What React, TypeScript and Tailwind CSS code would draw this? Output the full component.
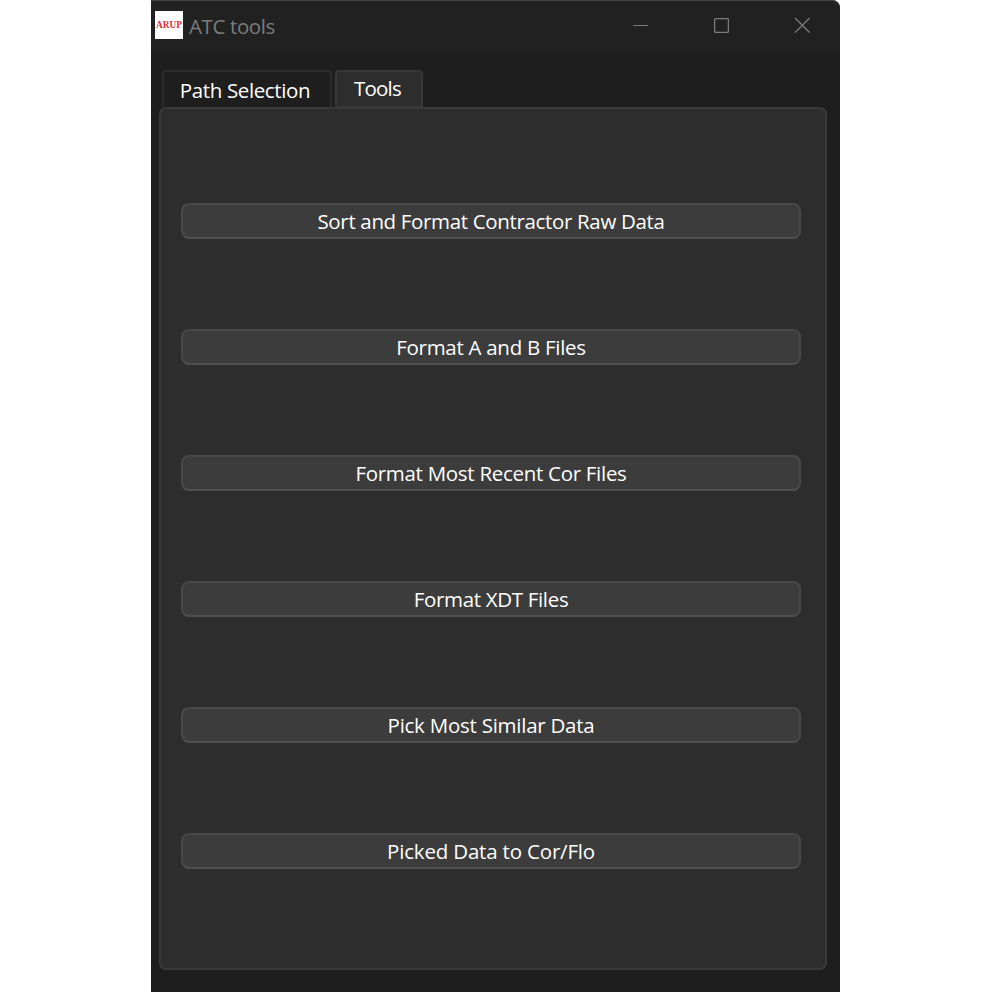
const actions = [
  { label: "Sort and Format Contractor Raw Data", tracking: "tracking-[-0.34px]" },
  { label: "Format A and B Files", tracking: "tracking-[-0.28px]" },
  { label: "Format Most Recent Cor Files", tracking: "tracking-[-0.29px]" },
  { label: "Format XDT Files", tracking: "tracking-[-0.32px]" },
  { label: "Pick Most Similar Data", tracking: "tracking-[-0.25px]" },
  { label: "Picked Data to Cor/Flo", tracking: "tracking-[-0.18px]" },
];

function TitleBar() {
  return (
    <header className="flex h-[51px] shrink-0 items-start rounded-tr-lg border-t border-[#444444] bg-[#212121] pl-1">
      <div className="mt-[10px] flex size-7 items-center justify-center bg-white pt-px">
        <span className="font-['Liberation_Serif',serif] text-[9.3px] leading-none font-bold text-[#d9303c]">ARUP</span>
      </div>
      <h1 className="mt-[10px] ml-[6px] text-[20.5px] leading-[30px] tracking-[-0.38px] whitespace-nowrap text-[#7c7c7c]">ATC tools</h1>
      <div className="mt-4 mr-[30px] ml-auto flex gap-[65px] text-[#7c7c7c]">
        <svg className="size-4" viewBox="0 0 16 16" stroke="currentColor" fill="none">
          <path d="M1 8.5H16" />
        </svg>
        <svg className="size-4" viewBox="0 0 16 16" stroke="currentColor" strokeWidth="1.3" fill="none">
          <rect x="1.6" y="1.6" width="13.8" height="13.8" rx="1" />
        </svg>
        <svg className="size-4" viewBox="0 0 16 16" stroke="currentColor" strokeWidth="1.3" fill="none">
          <path d="M1 1L15.6 15.6M15.6 1L1 15.6" />
        </svg>
      </div>
    </header>
  );
}

export default function App() {
  return (
    <div className="h-screen overflow-hidden bg-white pl-[151px] font-['Open_Sans','Noto_Sans',sans-serif]">
      <div className="flex h-full w-[689px] flex-col rounded-tr-lg bg-[#1e1e1e]">
        <TitleBar />
        <nav className="ml-[11px] flex h-14 shrink-0 items-end gap-[3px] text-[20.5px] leading-[30px] whitespace-nowrap text-white">
          <button className="h-[37px] w-[170px] rounded-t-[4px] border-2 border-b-0 border-[#2b2b2b] pr-1 tracking-[-0.38px]">Path Selection</button>
          <button className="relative top-px h-[38px] w-[88px] rounded-[4px] border-2 border-[#383838] bg-[#2d2d2d] pr-[3px] pb-[3px] tracking-[-0.8px]">Tools</button>
        </nav>
        <main className="ml-2 flex h-[863px] w-[668px] flex-col gap-[90px] rounded-[7px] border-2 border-[#393939] bg-[#2d2d2d] pt-[94px] pr-6 pl-5">
          {actions.map(({ label, tracking }) => (
            <button
              key={label}
              className={`flex h-9 shrink-0 items-center justify-center rounded-[8px] border-2 border-[#484848] border-b-[#505050] bg-[#3c3c3c] text-[20.5px] leading-[30px] whitespace-nowrap text-white ${tracking}`}
            >
              {label}
            </button>
          ))}
        </main>
      </div>
    </div>
  );
}
